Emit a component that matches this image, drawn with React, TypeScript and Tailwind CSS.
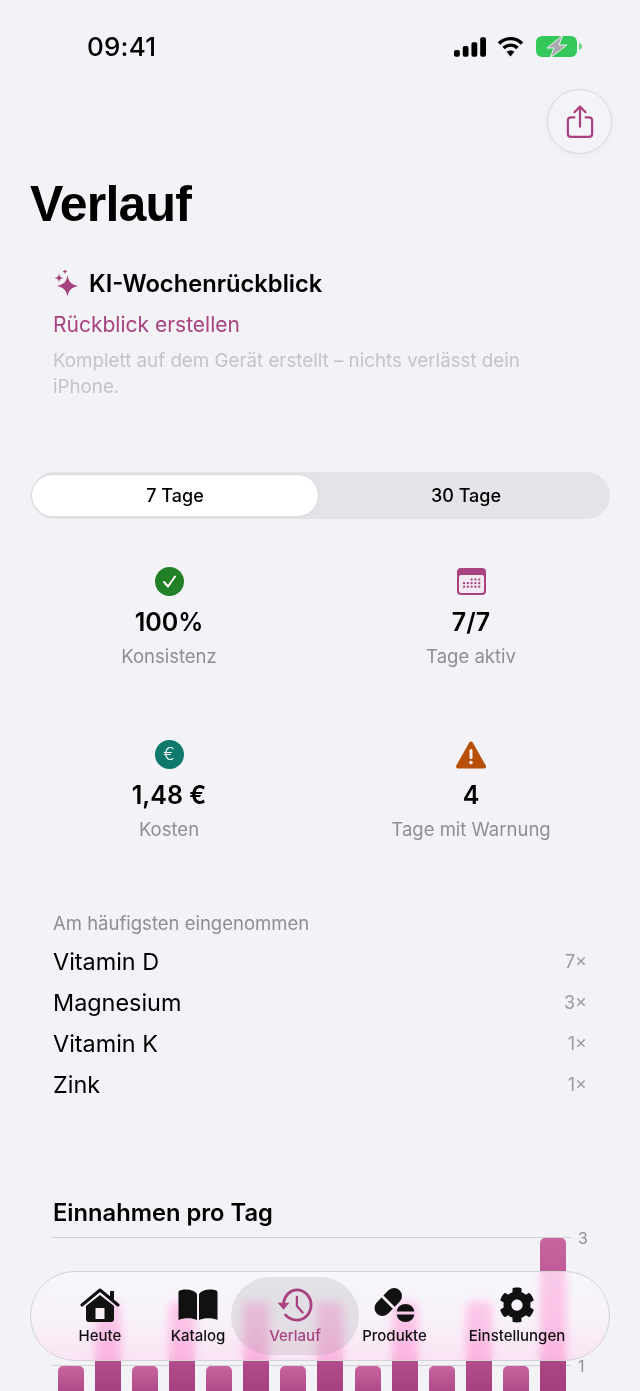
import { FaCog } from "react-icons/fa";

const stats = [
  { value: "100%", label: "Konsistenz", icon: "check" },
  { value: "7/7", label: "Tage aktiv", icon: "calendar" },
  { value: "1,48 €", label: "Kosten", icon: "euro" },
  { value: "4", label: "Tage mit Warnung", icon: "warning" },
];

const topItems = [
  { name: "Vitamin D", count: "7×" },
  { name: "Magnesium", count: "3×" },
  { name: "Vitamin K", count: "1×" },
  { name: "Zink", count: "1×" },
];

const bars = [
  "h-[40px]", "h-[104px]", "h-[40px]", "h-[104px]", "h-[40px]", "h-[104px]", "h-[40px]",
  "h-[104px]", "h-[40px]", "h-[104px]", "h-[40px]", "h-[104px]", "h-[40px]", "h-[168px]",
];

function StatusBar() {
  return (
    <div className="flex h-[94px] items-start justify-between pl-[87px] pr-[58px] pt-[32px]">
      <span className="text-[26px] leading-[30px] font-medium tracking-[0.2px] text-black">09:41</span>
      <div className="flex items-center gap-[12px] pt-[4px]">
        <svg width="32" height="20" viewBox="0 0 33 20" fill="#000" className="-mr-px">
          <rect x="0" y="13" width="6" height="7" rx="2" />
          <rect x="9" y="9" width="6" height="11" rx="2" />
          <rect x="18" y="5" width="6" height="15" rx="2" />
          <rect x="27" y="0" width="6" height="20" rx="2" />
        </svg>
        <svg width="27" height="21" viewBox="0 0 27 21" fill="none" stroke="#000" strokeWidth="3.4">
          <path d="M2 7.5C8.5 1 18.5 1 25 7.5" />
          <path d="M6.5 12C10.5 8.2 16.5 8.2 20.5 12" />
          <path d="M13.5 20.5L9.5 15.8C11.8 14 15.2 14 17.5 15.8Z" fill="#000" stroke="none" />
        </svg>
        <svg width="46" height="21" viewBox="0 0 46 21">
          <rect x="0" y="0" width="41" height="21" rx="6" fill="#34c759" />
          <path d="M43 7c2 .5 3 1.800 3 3.500S45 13.500 43 14z" fill="#34c759" opacity="0.7" />
          <path d="M27 -1L11 12h7l-4 10L31 9h-8z" fill="#a9a9b0" stroke="#eef3ee" strokeWidth="1" />
        </svg>
      </div>
    </div>
  );
}

function ShareButton() {
  return (
    <div className="flex justify-end pr-[28px] -mt-[5px]">
      <div className="flex h-[65px] w-[65px] items-center justify-center rounded-full border border-[#d9d9de] bg-[#f4f4f8] shadow-[0_1px_6px_rgba(0,0,0,0.05)]">
        <svg width="28" height="36" viewBox="0 0 30 36" fill="none" stroke="#a8437f" strokeWidth="2.4" strokeLinecap="round" strokeLinejoin="round">
          <path d="M15 23V2M9 7.500L15 1.500L21 7.500" />
          <path d="M9 13H5.500C3.500 13 2 14.500 2 16.500V30.500C2 32.500 3.500 34 5.500 34H24.500C26.500 34 28 32.500 28 30.500V16.500C28 14.500 26.500 13 24.500 13H21" />
        </svg>
      </div>
    </div>
  );
}

function Sparkles() {
  return (
    <svg width="26" height="30" viewBox="0 0 26 30" fill="#a8437f">
      <path d="M14.500 6C15.500 12.500 18 15.500 25 17C18 18.500 15.500 21.500 14.500 28C13.500 21.500 11 18.500 4 17C11 15.500 13.500 12.500 14.500 6Z" />
      <path d="M6 4.500C6.500 7.500 7.500 8.500 10.500 9C7.500 9.500 6.500 10.500 6 13.500C5.500 10.500 4.500 9.500 1.500 9C4.500 8.500 5.500 7.500 6 4.500Z" />
      <path d="M12 0C12.300 1.500 12.800 2 14.500 2.500C12.800 3 12.300 3.500 12 5C11.700 3.500 11.200 3 9.500 2.500C11.200 2 11.700 1.500 12 0Z" />
    </svg>
  );
}

function StatIcon({ icon }: { icon: string }) {
  if (icon === "check") {
    return (
      <svg width="29" height="29" viewBox="0 0 29 29">
        <circle cx="14.500" cy="14.500" r="14.500" fill="#228126" />
        <path d="M9 15L13 19.500L20 9.500" fill="none" stroke="#fff" strokeWidth="2" strokeLinecap="round" strokeLinejoin="round" />
      </svg>
    );
  }
  if (icon === "calendar") {
    return (
      <svg width="29" height="27" viewBox="0 0 29 27">
        <rect width="29" height="27" rx="4" fill="#a8437f" />
        <rect x="2" y="7" width="25" height="18" rx="2" fill="#f3e9f1" />
        <g fill="#a8437f">
          {[0, 1, 2].map((row) =>
            [0, 1, 2, 3, 4].map((col) =>
              row === 0 && col < 2 ? null : (
                <rect key={`${row}-${col}`} x={6 + col * 3.8} y={10.5 + row * 3.6} width="2" height="2" />
              ),
            ),
          )}
        </g>
      </svg>
    );
  }
  if (icon === "euro") {
    return (
      <div className="flex h-[29px] w-[29px] items-center justify-center rounded-full bg-[#0f7a6c] text-[17px] leading-none font-light text-white">
        €
      </div>
    );
  }
  return (
    <svg width="30" height="28" viewBox="0 0 30 28">
      <path d="M15 2.500L28 25.500H2Z" fill="#b9500a" stroke="#b9500a" strokeWidth="4" strokeLinejoin="round" />
      <rect x="13.500" y="8" width="3" height="10" rx="1.500" fill="#f2f2f7" />
      <circle cx="15" cy="21.500" r="1.800" fill="#f2f2f7" />
    </svg>
  );
}

function Stats() {
  return (
    <div className="grid grid-cols-[302px_302px] gap-y-[72px] pl-[18px] pt-[48px]">
      {stats.map((stat) => (
        <div key={stat.label} className="flex flex-col items-center">
          <div className="flex h-[29px] items-center">
            <StatIcon icon={stat.icon} />
          </div>
          <div className="mt-[11px] text-[25px] leading-[30px] font-semibold text-black">{stat.value}</div>
          <div className="mt-[7px] text-[18.500px] leading-[24px] text-[#8e8e93]">{stat.label}</div>
        </div>
      ))}
    </div>
  );
}

function Chart() {
  return (
    <div className="relative mt-[8px] h-[200px] pl-[52px]">
      <div className="absolute left-[52px] top-0 h-px w-[519px] bg-[#cfcfd4]" />
      <div className="absolute left-[52px] top-[64px] h-px w-[519px] bg-[#dcdce0]" />
      <div className="absolute left-[52px] top-[128px] h-px w-[519px] bg-[#cfcfd4]" />
      <span className="absolute left-[578px] top-[-8px] text-[16px] leading-[18px] text-[#8e8e93]">3</span>
      <span className="absolute left-[578px] top-[120px] text-[16px] leading-[18px] text-[#8e8e93]">1</span>
      <div className="flex w-[514px] items-start justify-between pl-[6px]">
        {bars.map((height, i) => (
          <div key={i} className="relative flex h-[169px] w-[26px] flex-col justify-end">
            <div className={`${height} w-[26px] rounded-t-[5px] bg-gradient-to-b from-[#c8649f] to-[#a13a7b]`} />
          </div>
        ))}
      </div>
    </div>
  );
}

function HomeIcon() {
  return (
    <svg width="40" height="36" viewBox="0 0 40 36">
      <path d="M2 18L20 3L38 18" fill="none" stroke="#111" strokeWidth="3" strokeLinecap="round" strokeLinejoin="round" />
      <rect x="30" y="4" width="4" height="9" fill="#111" />
      <path d="M6 19L20 8L34 19V32C34 34 33 35 31 35H9C7 35 6 34 6 32Z" fill="#111" />
      <rect x="15.500" y="21" width="9" height="11" fill="#f8eef5" />
    </svg>
  );
}

function BookIcon() {
  return (
    <svg width="40" height="32" viewBox="0 0 40 32" fill="#111">
      <path d="M19 5C17 2 13 0.500 8 0.500C5 0.500 2 1 1 2C0.500 2.500 0.500 3 0.500 4V31C5 28.500 14 28.500 19 31Z" />
      <path d="M21 5C23 2 27 0.500 32 0.500C35 0.500 38 1 39 2C39.500 2.500 39.500 3 39.500 4V31C35 28.500 26 28.500 21 31Z" />
    </svg>
  );
}

function HistoryIcon() {
  return (
    <svg width="36" height="34" viewBox="0 0 38 36" fill="none" stroke="#a8437f" strokeWidth="3" strokeLinecap="round">
      <path d="M7 15C8.500 7.500 14 2 21 2C29 2 36 9 36 18C36 27 29 34 21 34C16 34 12 32 9 28.500" />
      <path d="M21 9.500V19L27 26" strokeWidth="2.400" strokeLinejoin="round" />
      <path d="M0.500 15.500H13L7 23Z" fill="#a8437f" stroke="none" />
    </svg>
  );
}

function PillsIcon() {
  return (
    <svg width="41" height="34" viewBox="0 0 41 34" fill="#111">
      <path d="M8.500 20L20 8" fill="none" stroke="#111" strokeWidth="16" strokeLinecap="round" />
      <path d="M7 7L21 21" fill="none" stroke="#fbeef6" strokeWidth="2.600" />
      <path d="M22.800 23.500C23 19 27 16 31.500 16C36 16 40 19 40.200 23.500Z" />
      <path d="M22.800 26.500C23 31 27 34 31.500 34C36 34 40 31 40.200 26.500Z" />
    </svg>
  );
}

const navItems = [
  { label: "Heute", width: "w-[98px]", icon: <HomeIcon /> },
  { label: "Katalog", width: "w-[98px]", icon: <BookIcon /> },
  { label: "Verlauf", width: "w-[96px]", icon: <HistoryIcon />, active: true },
  { label: "Produkte", width: "w-[103px]", icon: <PillsIcon /> },
  { label: "Einstellungen", width: "w-[142px]", icon: <FaCog className="h-[36px] w-[36px] text-[#111]" /> },
];

function TabBar() {
  return (
    <div className="absolute left-[30px] top-[1271px] flex h-[90px] w-[580px] items-start rounded-[45px] border border-[#d2d2d6] bg-gradient-to-b from-[#f8f7fb]/75 via-[#f9f2f8]/75 to-[#fbdff0]/75 pl-[20px] pt-[5px] backdrop-blur-[4px] backdrop-saturate-200">
      {navItems.map((item) => (
        <div key={item.label} className={`relative flex h-[78px] flex-col items-center ${item.width}`}>
          {item.active && (
            <div className="absolute inset-y-0 -left-[16px] -right-[16px] rounded-[39px] bg-[#8a8a90]/20" />
          )}
          <div className="relative flex h-[42px] items-center justify-center pt-[14px]">{item.icon}</div>
          <span className={`relative mt-[8px] text-[15px] leading-[18px] font-medium ${item.active ? "text-[#a8437f]" : "text-[#111]"}`}>
            {item.label}
          </span>
        </div>
      ))}
    </div>
  );
}

export default function App() {
  return (
    <div className="relative h-[1391px] w-[640px] overflow-hidden bg-[#f2f2f7] font-['Inter',sans-serif]">
      <StatusBar />
      <ShareButton />

      <h1 className="pl-[30px] mt-[22px] text-[50px] leading-[56px] font-bold tracking-[-0.8px] text-black font-['Liberation_Sans',sans-serif]">
        Verlauf
      </h1>

      <section className="px-[53px] pt-[36px]">
        <div className="flex items-center gap-[10px]">
          <Sparkles />
          <span className="text-[23.700px] leading-[32px] font-semibold text-black">KI-Wochenrückblick</span>
        </div>
        <div className="mt-[11px] text-[21px] leading-[28px] text-[#a8437f]">Rückblick erstellen</div>
        <p className="mt-[9px] w-[500px] text-[18.750px] leading-[26px] text-[#c4c4c8]">
          Komplett auf dem Gerät erstellt – nichts verlässt dein iPhone.
        </p>
      </section>

      <div className="mx-[31px] mt-[72px] flex h-[47px] w-[579px] items-center rounded-[24px] bg-[#e3e3e8] py-[2px] pl-[1px]">
        <div className="flex h-[41px] w-[286px] items-center justify-center rounded-[21px] bg-white text-[18px] font-medium text-black shadow-[0_0_3px_rgba(0,0,0,0.1)]">
          7 Tage
        </div>
        <div className="flex flex-1 items-center justify-center pl-[4px] text-[18px] font-medium text-black">30 Tage</div>
      </div>

      <Stats />

      <section className="px-[53px] pt-[70px]">
        <div className="text-[18.500px] leading-[24px] text-[#8e8e93]">Am häufigsten eingenommen</div>
        <div className="mt-[6px] flex flex-col">
          {topItems.map((item) => (
            <div key={item.name} className="flex h-[41px] items-center justify-between">
              <span className="text-[23.400px] text-black">{item.name}</span>
              <span className="text-[18px] text-[#9a9a9f]">{item.count}</span>
            </div>
          ))}
        </div>
      </section>

      <h2 className="pl-[53px] pt-[92px] text-[23.700px] leading-[32px] font-semibold text-black">Einnahmen pro Tag</h2>
      <Chart />
      <TabBar />
    </div>
  );
}
